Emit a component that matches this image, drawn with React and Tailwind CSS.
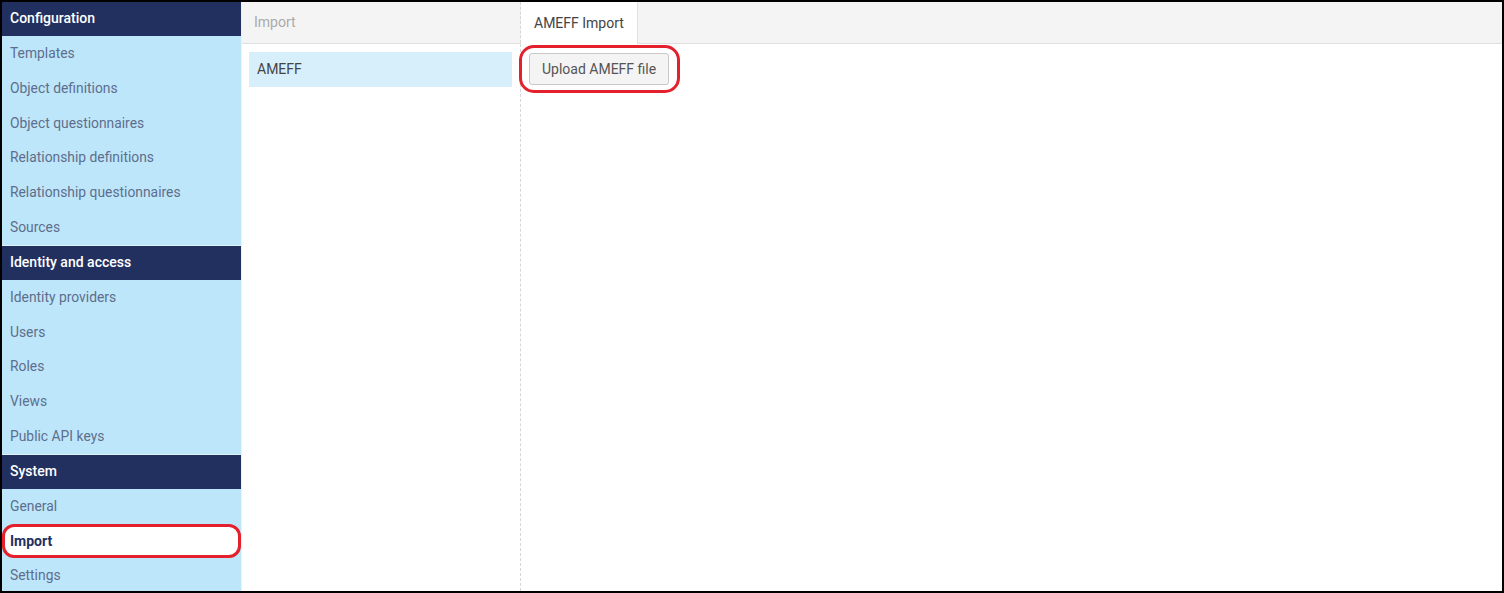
import React from "react";

const groups = [
  { title: "Configuration", items: ["Templates", "Object definitions", "Object questionnaires", "Relationship definitions", "Relationship questionnaires", "Sources"] },
  { title: "Identity and access", items: ["Identity providers", "Users", "Roles", "Views", "Public API keys"] },
  { title: "System", items: ["General", "Import", "Settings"] },
];

export default function App() {
  return (
    <div
      className="w-[1504px] h-[593px] border-2 border-black bg-white flex overflow-hidden relative"
      style={{ fontFamily: "Roboto, 'Liberation Sans', sans-serif" }}
    >
      <aside className="w-[240px] shrink-0 h-full bg-[#bde6fb] flex flex-col border-r border-[#e6f4fc]">
        {groups.map((g, gi) => (
          <div key={g.title} className="flex flex-col">
            <div
              className={
                gi === 0
                  ? "h-[33.8px] shrink-0 bg-[#22305f] text-white text-[14px] font-medium flex items-center pl-[8px]"
                  : "h-[34.85px] shrink-0 bg-[#22305f] text-white text-[14px] font-medium flex items-center pl-[8px] border-t border-[#dff2fd]"
              }
            >
              {g.title}
            </div>
            {g.items.map((it) =>
              it === "Import" ? (
                <div key={it} className="h-[34.85px] shrink-0 flex">
                  <div className="flex-1 bg-white border-[3px] border-[#e3202b] rounded-[12px] flex items-center pl-[5px] text-[14px] font-bold text-[#22305f]">
                    {it}
                  </div>
                </div>
              ) : (
                <div key={it} className="h-[34.85px] shrink-0 flex items-center pl-[8px] text-[13.85px] text-[#5e6e8c]">
                  {it}
                </div>
              )
            )}
          </div>
        ))}
      </aside>
      <main className="flex-1 flex flex-col">
        <div className="h-[42px] shrink-0 bg-[#f4f4f4] border-b border-[#dfdfdf] flex">
          <div className="w-[279px] shrink-0 border-r border-dashed border-[#d6d6d6] flex items-center pl-[12px] text-[14px] text-[#aaaaaa]">
            Import
          </div>
          <div className="h-[42px] bg-white border-r border-[#e0e0e0] flex items-center px-[13px] text-[14px] text-[#444444] -mb-px">
            AMEFF Import
          </div>
        </div>
        <div className="flex-1 flex">
          <div className="w-[279px] shrink-0 border-r border-dashed border-[#d6d6d6] pt-[8px] pl-[7px] pr-[8px]">
            <div className="h-[35px] bg-[#d7effb] flex items-center pl-[8px] text-[14px] text-[#444444]">AMEFF</div>
          </div>
          <div className="flex-1 pt-[9px] pl-[8px]">
            <div className="relative inline-block">
              <button className="h-[32px] px-[12px] bg-[#f4f4f4] border border-[#c8c8c8] rounded-[3px] text-[14px] text-[#555555]">
                Upload AMEFF file
              </button>
              <div className="absolute -left-[10px] -top-[8px] -right-[11px] -bottom-[8px] border-[3px] border-[#e3202b] rounded-[15px] pointer-events-none" />
            </div>
          </div>
        </div>
      </main>
    </div>
  );
}
